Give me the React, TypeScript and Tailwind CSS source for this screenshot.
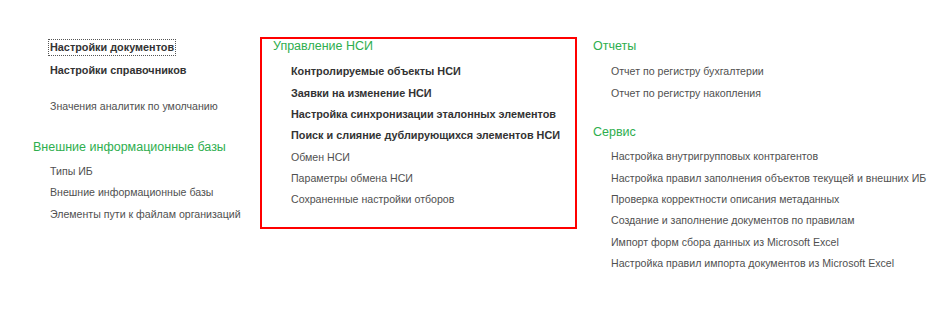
import React from "react";

const font = { fontFamily: '"Liberation Sans", Arial, sans-serif' };

function Item({ text, bold }: { text: string; bold?: boolean }) {
  return (
    <div
      className={`h-[21.33px] whitespace-nowrap leading-[21.33px] ${
        bold ? "text-[10.85px] font-bold text-[#333333]" : "text-[10.6px] text-[#505050]"
      }`}
    >
      {text}
    </div>
  );
}

function Heading({ text, className = "" }: { text: string; className?: string }) {
  return (
    <div className={`h-[14px] whitespace-nowrap text-[12.5px] leading-[14px] text-[#2eae4e] ${className}`}>
      {text}
    </div>
  );
}

export default function App() {
  return (
    <main className="h-[314px] w-[952px] bg-white" style={font}>
      <div className="flex items-start pl-[33px] pt-[37px]">
        {/* левая колонка */}
        <section className="w-[227px] border-2 border-transparent">
          <div className="pl-[15px]">
            <div className="ml-[-2px] flex h-[17px] w-fit items-center border border-dotted border-[#555] px-px text-[10.85px] font-bold leading-[15px] text-[#333333]">
              Настройки документов
            </div>
            <div className="mt-[4px]">
              <Item text="Настройки справочников" bold />
            </div>
            <div className="mt-[14.67px]">
              <Item text="Значения аналитик по умолчанию" />
            </div>
          </div>
          <Heading text="Внешние информационные базы" className="mt-[21.33px] ml-[-2px] h-[16px] leading-[16px]" />
          <div className="mt-[6.33px] pl-[15px]">
            <Item text="Типы ИБ" />
            <Item text="Внешние информационные базы" />
            <Item text="Элементы пути к файлам организаций" />
          </div>
        </section>

        {/* Управление НСИ */}
        <section className="w-[317px] border-2 border-[#ff0000] pb-[16.33px] pl-[11px]">
          <Heading text="Управление НСИ" />
          <div className="mt-[8.33px] pl-[18px]">
            <Item text="Контролируемые объекты НСИ" bold />
            <Item text="Заявки на изменение НСИ" bold />
            <Item text="Настройка синхронизации эталонных элементов" bold />
            <Item text="Поиск и слияние дублирующихся элементов НСИ" bold />
            <Item text="Обмен НСИ" />
            <Item text="Параметры обмена НСИ" />
            <Item text="Сохраненные настройки отборов" />
          </div>
        </section>

        {/* правая колонка */}
        <section className="ml-[14px] border-2 border-transparent">
          <Heading text="Отчеты" />
          <div className="mt-[8.33px] pl-[18px]">
            <Item text="Отчет по регистру бухгалтерии" />
            <Item text="Отчет по регистру накопления" />
          </div>
          <Heading text="Сервис" className="mt-[21px]" />
          <div className="mt-[7.33px] pl-[18px]">
            <Item text="Настройка внутригрупповых контрагентов" />
            <Item text="Настройка правил заполнения объектов текущей и внешних ИБ" />
            <Item text="Проверка корректности описания метаданных" />
            <Item text="Создание и заполнение документов по правилам" />
            <Item text="Импорт форм сбора данных из Microsoft Excel" />
            <Item text="Настройка правил импорта документов из Microsoft Excel" />
          </div>
        </section>
      </div>
    </main>
  );
}
